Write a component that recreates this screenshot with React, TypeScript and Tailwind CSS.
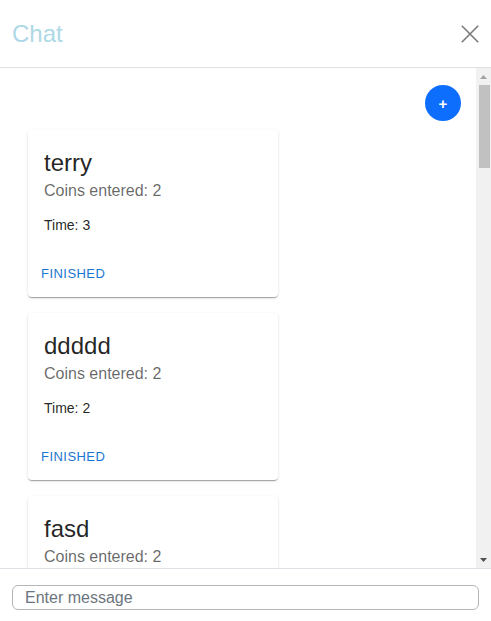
import React from 'react';

type Entry = { name: string; coins: number; time: number };

const entries: Entry[] = [
  { name: 'terry', coins: 2, time: 3 },
  { name: 'ddddd', coins: 2, time: 2 },
  { name: 'fasd', coins: 2, time: 2 },
  { name: 'asdf', coins: 1, time: 4 },
  { name: 'terry', coins: 3, time: 1 },
  { name: 'bob', coins: 2, time: 5 },
];

const font = { fontFamily: '"Liberation Sans", Arial, Helvetica, sans-serif' };

function EntryCard({ entry }: { entry: Entry }) {
  return (
    <div className="w-[250px] shrink-0 rounded-[4px] bg-white shadow-[0px_2px_1px_-1px_rgba(0,0,0,0.2),0px_1px_1px_0px_rgba(0,0,0,0.14),0px_1px_3px_0px_rgba(0,0,0,0.12)]">
      <div className="p-4">
        <div className="pt-px text-[24px] leading-[32px] text-black/[0.87]">{entry.name}</div>
        <div className="mb-3 text-[16px] leading-[24px] text-black/60">Coins entered: {entry.coins}</div>
        <div className="text-[14px] leading-[20px] text-black/[0.87]">Time: {entry.time}</div>
      </div>
      <div className="flex items-center px-2 pb-2 pt-[7px]">
        <button className="h-[31px] rounded-[4px] px-[5px] text-[13px] font-medium uppercase tracking-[0.46px] text-[#1976d2]">
          Finished
        </button>
      </div>
    </div>
  );
}

// fake classic scrollbar (headless screenshots hide the native one)
function ScrollBar() {
  return (
    <div className="flex w-[15px] shrink-0 flex-col bg-[#f1f1f1]">
      <div className="flex h-[17px] items-center justify-center">
        <svg width="7" height="4" viewBox="0 0 7 4">
          <path d="M0 4 L3.5 0 L7 4 Z" fill="#a3a3a3" />
        </svg>
      </div>
      <div className="flex-1">
        <div className="ml-[3px] mr-px h-[83px] bg-[#c1c1c1]" />
      </div>
      <div className="flex h-[17px] items-center justify-center">
        <svg width="7" height="4" viewBox="0 0 7 4">
          <path d="M0 0 L7 0 L3.5 4 Z" fill="#505050" />
        </svg>
      </div>
    </div>
  );
}

export default function App() {
  return (
    <div className="flex h-[621px] flex-col bg-white" style={font}>
      <div className="flex h-[68px] shrink-0 items-center justify-between border-b border-[#dee2e6] pl-3 pr-3">
        <h5 className="text-[24px] leading-none text-[#add8e6]">Chat</h5>
        <button className="flex h-[18px] w-[18px] items-center justify-center" aria-label="Close">
          <svg width="18" height="18" viewBox="0 0 18 18">
            <path d="M0.8 0.8 L17.2 17.2 M17.2 0.8 L0.8 17.2" stroke="#7a7a7a" strokeWidth="1.6" />
          </svg>
        </button>
      </div>

      <div className="flex min-h-0 flex-1">
        <div className="min-w-0 flex-1 overflow-hidden">
          <div className="flex justify-end pr-[15px] pt-[17px]">
            <button className="flex h-[36px] w-[36px] items-center justify-center rounded-full bg-[#0d6efd] text-[15px] font-semibold leading-none text-white">
              +
            </button>
          </div>
          <div className="flex flex-col gap-4 pb-4 pl-[28px] pt-[9px]">
            {entries.map((e, i) => (
              <EntryCard key={i} entry={e} />
            ))}
          </div>
        </div>
        <ScrollBar />
      </div>

      <div className="h-[53px] shrink-0 border-t border-[#dee2e6] px-3 pt-4">
        <input
          className="h-[25px] w-full rounded-[6px] border border-[#b5b5b5] px-3 text-[16px] text-[#212529] outline-none placeholder:text-[#6c757d]"
          placeholder="Enter message"
        />
      </div>
    </div>
  );
}
